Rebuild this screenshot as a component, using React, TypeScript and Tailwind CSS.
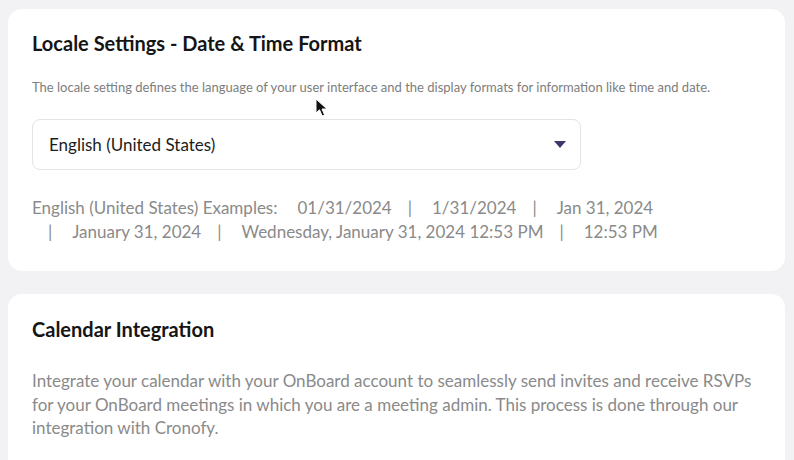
import React from 'react'

const examples = ['01/31/2024', '1/31/2024', 'Jan 31, 2024', 'January 31, 2024', 'Wednesday, January 31, 2024 12:53 PM', '12:53 PM']

function Cursor() {
  return (
    <svg className="absolute left-[315px] top-[98px]" width="14" height="20" viewBox="0 0 14 20">
      <path d="M1 1 L1 15 L4.5 11.8 L7.2 18 L9.6 17 L7 11 L12 11 Z" fill="#111" stroke="#fff" strokeWidth="1" strokeLinejoin="round" />
    </svg>
  )
}

export default function App() {
  return (
    <div className="relative min-h-[460px] bg-[#f2f2f4] px-2 pt-[9px] font-['Lato','Noto_Sans',sans-serif]">
      <Cursor />
      {/* Locale settings */}
      <div className="w-[777px] rounded-[14px] bg-white px-6 pt-5 pb-[27px]">
        <h2 className="text-[20px] leading-[28px] font-bold text-[#151515]">Locale Settings - Date &amp; Time Format</h2>
        <p className="mt-[22px] text-[13px] leading-4 text-[#7d7d7d]">
          The locale setting defines the language of your user interface and the display formats for information like time and date.
        </p>
        <div className="mt-6 flex h-[51px] w-[549px] items-center justify-between rounded-lg border-[1.5px] border-[#e4e4e8] pl-4 pr-[14px]">
          <span className="text-[17px] text-[#1c1c1c]">English (United States)</span>
          <svg width="12" height="7" viewBox="0 0 12 7">
            <path d="M0 0 H12 L6 7 Z" fill="#3c3a6c" />
          </svg>
        </div>
        <div className="mt-[26px] flex flex-wrap text-[17px] leading-6 text-[#8a8a8a]">
          <span>English (United States) Examples:</span>
          {examples.map((ex, i) =>
            i === 0 ? (
              <span key={ex} className="pl-5">{ex}</span>
            ) : (
              <span key={ex}>
                <span className="pl-4 pr-5">|</span>
                {ex}
              </span>
            )
          )}
        </div>
      </div>

      {/* Calendar integration */}
      <div className="mt-[23px] w-[777px] rounded-t-[14px] bg-white px-6 pt-[21px] pb-5">
        <h2 className="text-[20px] leading-[28px] font-bold text-[#151515]">Calendar Integration</h2>
        <p className="mt-[26px] text-[17px] leading-[23.5px] text-[#8a8a8a]">
          Integrate your calendar with your OnBoard account to seamlessly send invites and receive RSVPs for your OnBoard meetings in which you are a meeting admin. This process is done through our integration with Cronofy.
        </p>
      </div>
    </div>
  )
}
